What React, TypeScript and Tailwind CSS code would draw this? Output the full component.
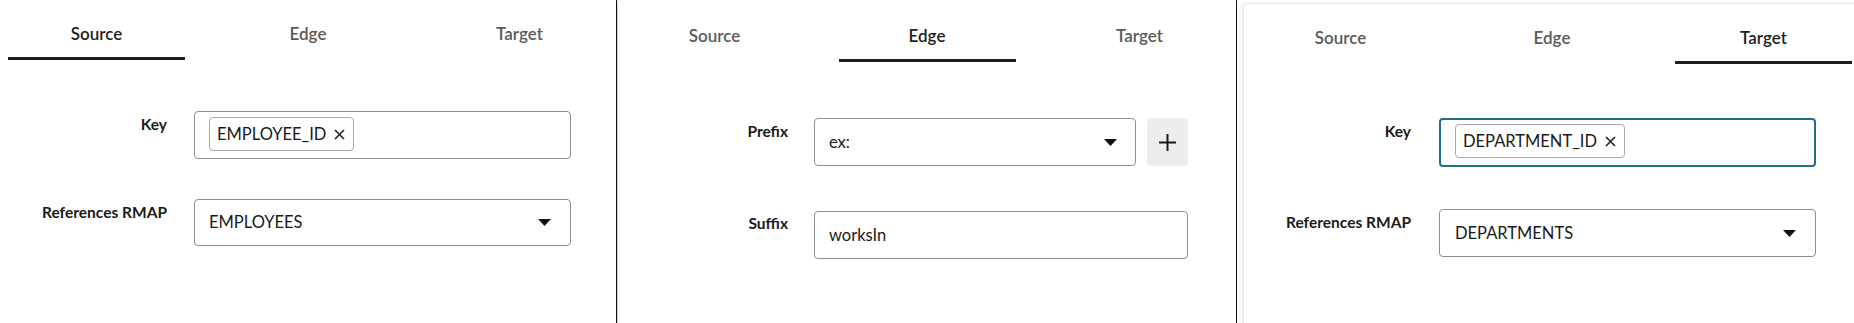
import React from "react";

const FONT = { fontFamily: '"Lato", "Liberation Sans", sans-serif' };

function Tabs({ active, top }: { active: number; top: string }) {
  const names = ["Source", "Edge", "Target"];
  return (
    <div className={`flex justify-between px-2 ${top}`}>
      {names.map((n, i) => (
        <div
          key={n}
          className={`w-[177px] pb-[11px] text-center text-[17px] leading-[24px] font-semibold border-b-[3px] ${
            i === active ? "border-[#1e1e1e] text-[#1e1e1e]" : "border-transparent text-[#5a5a5a]"
          }`}
        >
          {n}
        </div>
      ))}
    </div>
  );
}

function Caret() {
  return (
    <svg width="13" height="7" viewBox="0 0 13 7" className="shrink-0">
      <path d="M0 0 H13 L6.5 7 Z" fill="#111" />
    </svg>
  );
}

function Chip({ text }: { text: string }) {
  return (
    <div className="flex h-full items-center gap-[8px] rounded-[4px] border border-[#a9a9a9] bg-white pl-[7px] pr-[8px] text-[16.5px] text-[#1a1a1a]">
      <span>{text}</span>
      <svg width="11" height="11" viewBox="0 0 11 11">
        <path d="M1 1 L10 10 M10 1 L1 10" stroke="#222" strokeWidth="1.6" />
      </svg>
    </div>
  );
}

function Label({ text, w, pt }: { text: string; w: string; pt: string }) {
  return (
    <div className={`${w} ${pt} shrink-0 text-right text-[15.5px] leading-[20px] font-bold text-[#1a1a1a]`}>
      {text}
    </div>
  );
}

export default function App() {
  return (
    <div className="flex h-[323px] w-[1854px] overflow-hidden bg-white" style={FONT}>
      {/* Panel 1 */}
      <div className="h-full w-[617px] shrink-0 border-r border-[#111]">
        <Tabs active={0} top="pt-[22px]" />
        <div className="mt-[51px] flex flex-col gap-[40px]">
          <div className="flex items-start">
            <Label text="Key" w="w-[167px]" pt="pt-[3px]" />
            <div className="ml-[27px] flex h-[48px] w-[377px] items-stretch rounded-[4px] border border-[#8e8e8e] py-[5px] pl-[14px] pb-[7px]">
              <Chip text="EMPLOYEE_ID" />
            </div>
          </div>
          <div className="flex items-start">
            <Label text="References RMAP" w="w-[167px]" pt="pt-[3px]" />
            <div className="ml-[27px] flex h-[47px] w-[377px] items-center justify-between rounded-[4px] border border-[#8e8e8e] pl-[14px] pr-[19px] text-[16.5px] text-[#1a1a1a]">
              <span>EMPLOYEES</span>
              <Caret />
            </div>
          </div>
        </div>
      </div>

      {/* Panel 2 */}
      <div className="h-full w-[620px] shrink-0 rounded-tl-[4px] border-l border-r border-l-[#d4d4d4] border-r-[#111]">
        <Tabs active={1} top="pt-[24px]" />
        <div className="mt-[56px] flex flex-col gap-[45px]">
          <div className="flex items-start">
            <Label text="Prefix" w="w-[170px]" pt="pt-[3px]" />
            <div className="ml-[26px] flex h-[48px] w-[322px] items-center justify-between rounded-[4px] border border-[#8e8e8e] pl-[14px] pr-[18px] text-[16.5px] text-[#1a1a1a]">
              <span>ex:</span>
              <Caret />
            </div>
            <div className="ml-[11px] flex h-[48px] w-[41px] items-center justify-center rounded-[4px] bg-[#ededed]">
              <svg width="17" height="17" viewBox="0 0 17 17">
                <path d="M8.5 0 V17 M0 8.5 H17" stroke="#1a1a1a" strokeWidth="2" />
              </svg>
            </div>
          </div>
          <div className="flex items-start">
            <Label text="Suffix" w="w-[170px]" pt="pt-[2px]" />
            <div className="ml-[26px] flex h-[48px] w-[374px] items-center rounded-[4px] border border-[#8e8e8e] pl-[14px] text-[16.5px] text-[#1a1a1a]">
              <span>worksIn</span>
            </div>
          </div>
        </div>
      </div>

      {/* Panel 3 */}
      <div className="h-full w-[624px] shrink-0 pl-[6px] pt-[3px]">
        <div className="h-[330px] w-[618px] rounded-tl-[6px] border border-[#e8e8e8] shadow-[-3px_0_5px_rgba(0,0,0,0.06)]">
          <Tabs active={2} top="pt-[22px]" />
          <div className="mt-[54px] flex flex-col gap-[42px]">
            <div className="flex items-start">
              <Label text="Key" w="w-[167px]" pt="pt-[3px]" />
              <div className="ml-[28px] flex h-[49px] w-[377px] items-stretch rounded-[4px] border-2 border-[#216e8c] py-[4px] pl-[14px] pb-[7px]">
                <Chip text="DEPARTMENT_ID" />
              </div>
            </div>
            <div className="flex items-start">
              <Label text="References RMAP" w="w-[167px]" pt="pt-[3px]" />
              <div className="ml-[28px] flex h-[48px] w-[377px] items-center justify-between rounded-[4px] border border-[#8e8e8e] pl-[15px] pr-[19px] text-[16.5px] text-[#1a1a1a]">
                <span>DEPARTMENTS</span>
                <Caret />
              </div>
            </div>
          </div>
        </div>
      </div>
    </div>
  );
}
